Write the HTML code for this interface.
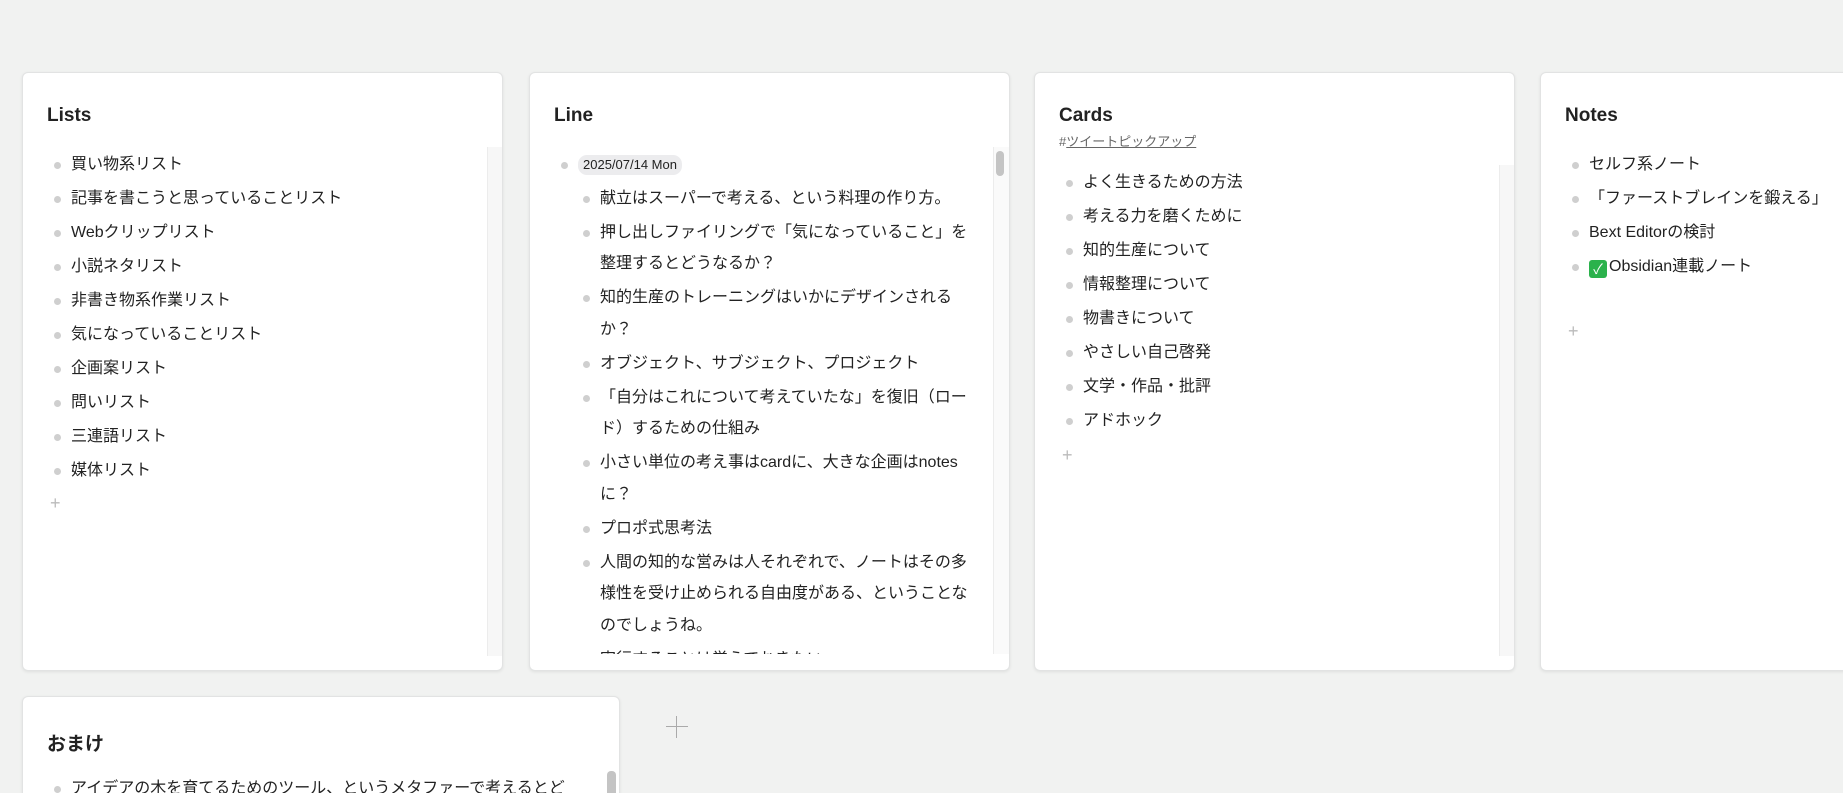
<!DOCTYPE html>
<html style="width:1843px;height:793px;overflow:hidden"><head><meta charset="utf-8"><style>
*{box-sizing:border-box;margin:0;padding:0}
body{width:1843px;height:793px;background:#f1f2f1;overflow:hidden;position:relative;font-family:"Liberation Sans","Noto Sans CJK JP",sans-serif;color:#222}
.card{position:absolute;background:#fff;border:1px solid #e2e3e3;border-radius:6px;box-shadow:0 1px 3px rgba(0,0,0,.08);overflow:hidden}
.title{position:absolute;left:24px;top:32px;font-size:19px;font-weight:bold;color:#222}
.body{position:absolute;left:0;right:0;overflow:hidden}
.track{position:absolute;right:0;width:15px;background:#f7f7f7;border-left:1px solid #ececec}
ul{list-style:none;position:absolute}
li{position:relative;font-size:16px;line-height:31.5px;margin-bottom:2.5px;padding-left:20px}
li::before{content:"";position:absolute;left:3px;top:13px;width:7px;height:7px;border-radius:50%;background:#cfcfcf}
.plus{position:absolute;color:#bbb;font-size:18px;font-weight:300}
.chip{display:inline-block;background:#ececee;border-radius:9px;font-size:13px;line-height:20px;padding:0 5px;vertical-align:middle}
</style></head><body>

<div class="card" style="left:22px;top:72px;width:481px;height:599px">
 <div class="title">Lists</div>
 <div class="body" style="top:74px;height:509px">
  <div class="track" style="top:0;bottom:0"></div>
  <ul style="left:28px;top:2px;width:420px">
   <li>買い物系リスト</li><li>記事を書こうと思っていることリスト</li><li>Webクリップリスト</li><li>小説ネタリスト</li><li>非書き物系作業リスト</li><li>気になっていることリスト</li><li>企画案リスト</li><li>問いリスト</li><li>三連語リスト</li><li>媒体リスト</li>
  </ul>
  <div class="plus" style="left:27px;top:346px">+</div>
 </div>
</div>

<div class="card" style="left:529px;top:72px;width:481px;height:599px">
 <div class="title">Line</div>
 <div class="body" style="top:74px;height:507px">
  <div class="track" style="top:0;bottom:0;width:16px;background:#fafafa"></div>
  <div style="position:absolute;right:5px;top:4px;width:8px;height:25px;border-radius:4px;background:#c4c4c4"></div>
  <ul style="left:28px;top:2px;width:420px">
   <li><span class="chip">2025/07/14 Mon</span>
    <ul style="position:static;margin-top:2px;margin-left:2px">
     <li>献立はスーパーで考える、という料理の作り方。</li>
     <li>押し出しファイリングで「気になっていること」を整理するとどうなるか？</li>
     <li>知的生産のトレーニングはいかにデザインされるか？</li>
     <li>オブジェクト、サブジェクト、プロジェクト</li>
     <li>「自分はこれについて考えていたな」を復旧（ロード）するための仕組み</li>
     <li>小さい単位の考え事はcardに、大きな企画はnotesに？</li>
     <li>プロポ式思考法</li>
     <li>人間の知的な営みは人それぞれで、ノートはその多様性を受け止められる自由度がある、ということなのでしょうね。</li>
     <li>実行することは覚えておきたい</li>
     <li>その他</li>
    </ul>
   </li>
  </ul>
 </div>
</div>

<div class="card" style="left:1034px;top:72px;width:481px;height:599px">
 <div class="title">Cards</div>
 <div style="position:absolute;left:24px;top:58px;font-size:13px;color:#666">#<span style="text-decoration:underline">ツイートピックアップ</span></div>
 <div class="body" style="top:92px;height:491px">
  <div class="track" style="top:0;bottom:0"></div>
  <ul style="left:28px;top:2px;width:420px">
   <li>よく生きるための方法</li><li>考える力を磨くために</li><li>知的生産について</li><li>情報整理について</li><li>物書きについて</li><li>やさしい自己啓発</li><li>文学・作品・批評</li><li>アドホック</li>
  </ul>
  <div class="plus" style="left:27px;top:280px">+</div>
 </div>
</div>

<div class="card" style="left:1540px;top:72px;width:481px;height:599px">
 <div class="title">Notes</div>
 <div class="body" style="top:74px;height:509px">
  <ul style="left:28px;top:2px;width:420px">
   <li>セルフ系ノート</li><li>「ファーストブレインを鍛える」</li><li>Bext Editorの検討</li><li><span style="display:inline-block;width:18px;height:18px;background:#2bb24c;border-radius:3px;color:#fff;font-size:14px;line-height:18px;text-align:center;vertical-align:-3px;margin-right:2px">✓</span>Obsidian連載ノート</li>
  </ul>
  <div class="plus" style="left:27px;top:174px">+</div>
 </div>
</div>

<div class="card" style="left:22px;top:696px;width:598px;height:110px">
 <div class="title" style="top:32px">おまけ</div>
 <div class="body" style="top:74px;height:36px">
  <div style="position:absolute;right:3px;top:0;width:9px;height:40px;border-radius:4px;background:#c4c4c4"></div>
  <ul style="left:28px;top:2px;width:540px">
   <li>アイデアの木を育てるためのツール、というメタファーで考えるとど</li>
  </ul>
 </div>
</div>

<div style="position:absolute;left:666px;top:716px;width:22px;height:22px">
 <div style="position:absolute;left:10px;top:0;width:1px;height:22px;background:#aaa"></div>
 <div style="position:absolute;left:0;top:10px;width:22px;height:1px;background:#aaa"></div>
</div>
</body></html>
